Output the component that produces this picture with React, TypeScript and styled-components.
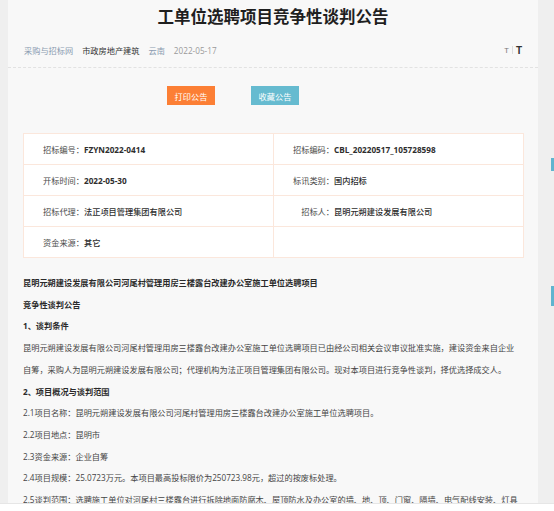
import React from 'react'
import styled, { createGlobalStyle } from 'styled-components'

const GlobalStyle = createGlobalStyle`
  html, body {
    margin: 0;
    padding: 0;
    background: #efefef;
    overflow: hidden;
  }
  body {
    font-family: "Open Sans", "Noto Sans CJK SC", sans-serif;
  }
`

const Page = styled.div`
  padding-left: 8px;
  height: 511px;
`

const Card = styled.div`
  width: 530px;
  min-height: 511px;
  background: #f8f8f8;
  color: #333;
`

const Title = styled.h1`
  margin: 0;
  padding-top: 4px;
  font-family: "Noto Sans CJK SC", sans-serif;
  font-size: 16.5px;
  line-height: 24px;
  font-weight: 700;
  color: #1f1f1f;
  text-align: center;
`

const MetaRow = styled.div`
  margin-top: 14px;
  padding: 0 16px 9px;
  display: flex;
  align-items: center;
  height: 16px;
  border-bottom: 1px dashed #e2e2e2;
  font-size: 8.2px;
`

const MetaItem = styled.span<{ $tone: 'link' | 'dark' | 'muted' }>`
  margin-right: 9px;
  color: ${(p) =>
    p.$tone === 'link' ? '#8b9cb1' : p.$tone === 'dark' ? '#333' : '#9a9a9a'};
`

const FontSwitch = styled.div`
  margin-left: auto;
  display: flex;
  align-items: center;
  gap: 3px;
  font-family: "Liberation Sans", sans-serif;
`

const SizeT = styled.span<{ $big?: boolean }>`
  font-size: ${(p) => (p.$big ? '10px' : '7.5px')};
  font-weight: ${(p) => (p.$big ? 700 : 400)};
  color: ${(p) => (p.$big ? '#333' : '#777')};
`

const Divider = styled.span`
  width: 1px;
  height: 8px;
  background: #dcdcdc;
`

const Actions = styled.div`
  margin-top: 18px;
  padding-left: 159px;
  display: flex;
  gap: 36px;
`

const ActionButton = styled.button<{ $color: string }>`
  width: 48px;
  height: 19px;
  padding: 0;
  border: none;
  background: ${(p) => p.$color};
  color: #fff;
  font-family: "Noto Sans CJK SC", sans-serif;
  font-size: 8.2px;
  cursor: pointer;
`

const InfoTable = styled.div`
  margin: 28px 14px 0 15px;
  display: grid;
  grid-template-columns: 1fr 1fr;
  background: #fff;
  border-top: 1px solid #fbe7dc;
  border-left: 1px solid #fbe7dc;
`

const Cell = styled.div`
  height: 30px;
  padding-left: 19px;
  display: flex;
  align-items: center;
  border-right: 1px solid #fbe7dc;
  border-bottom: 1px solid #fbe7dc;
  font-size: 8.2px;
  white-space: nowrap;
`

const Label = styled.span`
  display: inline-block;
  width: 41px;
  text-align: right;
  color: #4a4a4a;
`

const Value = styled.span<{ $latin?: boolean }>`
  font-weight: ${(p) => (p.$latin ? 700 : 500)};
  color: #2e2e2e;
`

const Article = styled.div`
  margin-top: 14px;
  padding: 0 14px 0 15px;
  font-size: 8.2px;
  line-height: 21.7px;
  color: #454545;
`

const Para = styled.p<{ $strong?: boolean }>`
  margin: 0;
  white-space: nowrap;
  overflow: hidden;
  font-weight: ${(p) => (p.$strong ? 700 : 400)};
  color: ${(p) => (p.$strong ? '#2a2a2a' : '#454545')};
`

const SideTab = styled.div<{ $top: number; $h: number }>`
  position: fixed;
  right: 0;
  top: ${(p) => p.$top}px;
  width: 3px;
  height: ${(p) => p.$h}px;
  background: #5fb4cf;
`

const BottomBar = styled.div`
  position: fixed;
  left: 0;
  right: 0;
  bottom: 0;
  height: 7px;
  background: #fff;
  border-top: 1px solid #e6e6e6;
`

type InfoCell = { label: string; value: string; latin?: boolean }

const info: [InfoCell, InfoCell | null][] = [
  [
    { label: '招标编号：', value: 'FZYN2022-0414', latin: true },
    { label: '招标编码：', value: 'CBL_20220517_105728598', latin: true },
  ],
  [
    { label: '开标时间：', value: '2022-05-30', latin: true },
    { label: '标讯类别：', value: '国内招标' },
  ],
  [
    { label: '招标代理：', value: '法正项目管理集团有限公司' },
    { label: '招标人：', value: '昆明元朔建设发展有限公司' },
  ],
  [{ label: '资金来源：', value: '其它' }, null],
]

export default function App() {
  return (
    <>
      <GlobalStyle />
      <Page>
        <Card>
          <Title>工单位选聘项目竞争性谈判公告</Title>

          <MetaRow>
            <MetaItem $tone="link">采购与招标网</MetaItem>
            <MetaItem $tone="dark">市政房地产建筑</MetaItem>
            <MetaItem $tone="link">云南</MetaItem>
            <MetaItem $tone="muted">2022-05-17</MetaItem>
            <FontSwitch>
              <SizeT>T</SizeT>
              <Divider />
              <SizeT $big>T</SizeT>
            </FontSwitch>
          </MetaRow>

          <Actions>
            <ActionButton $color="#fc7f35">打印公告</ActionButton>
            <ActionButton $color="#66bbd0">收藏公告</ActionButton>
          </Actions>

          <InfoTable>
            {info.map((row, i) => (
              <React.Fragment key={i}>
                {row.map((cell, j) => (
                  <Cell key={j}>
                    {cell ? (
                      <>
                        <Label>{cell.label}</Label>
                        <Value $latin={cell.latin}>{cell.value}</Value>
                      </>
                    ) : null}
                  </Cell>
                ))}
              </React.Fragment>
            ))}
          </InfoTable>

          <Article>
            <Para $strong>昆明元朔建设发展有限公司河尾村管理用房三楼露台改建办公室施工单位选聘项目</Para>
            <Para $strong>竞争性谈判公告</Para>
            <Para $strong>1、谈判条件</Para>
            <Para>
              昆明元朔建设发展有限公司河尾村管理用房三楼露台改建办公室施工单位选聘项目已由经公司相关会议审议批准实施，建设资金来自企业
              <br />
              自筹，采购人为昆明元朔建设发展有限公司；代理机构为法正项目管理集团有限公司。现对本项目进行竞争性谈判，择优选择成交人。
            </Para>
            <Para $strong>2、项目概况与谈判范围</Para>
            <Para>2.1项目名称：昆明元朔建设发展有限公司河尾村管理用房三楼露台改建办公室施工单位选聘项目。</Para>
            <Para>2.2项目地点：昆明市</Para>
            <Para>2.3资金来源：企业自筹</Para>
            <Para>2.4项目规模：25.0723万元。本项目最高投标限价为250723.98元，超过的按废标处理。</Para>
            <Para>2.5谈判范围：选聘施工单位对河尾村三楼露台进行拆除地面防腐木、屋顶防水及办公室的墙、地、顶、门窗、隔墙、电气配线安装、灯具</Para>
          </Article>
        </Card>
      </Page>
      <SideTab $top={158} $h={13} />
      <SideTab $top={286} $h={20} />
      <BottomBar />
    </>
  )
}
